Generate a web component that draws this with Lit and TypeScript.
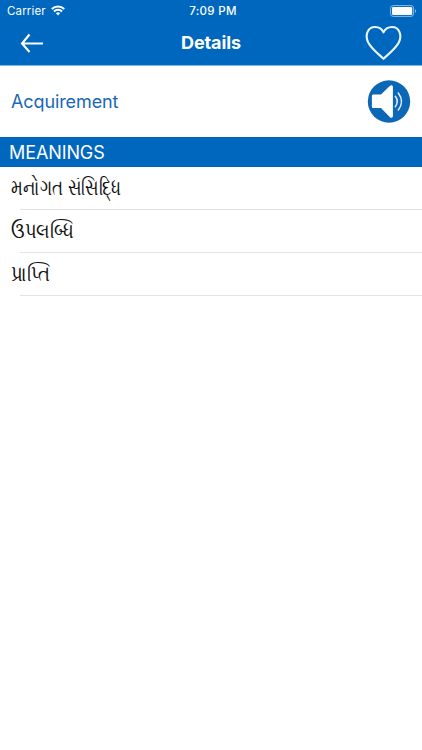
import { LitElement, html, css } from "lit";
import { styleMap } from "lit/directives/style-map.js";

interface Meaning {
  text: string;
  condense: number;
}

class AppRoot extends LitElement {
  static styles = css`
    :host {
      display: block;
      width: 100%;
      height: 750px;
      background: #fff;
      overflow: hidden;
      font-family: "Inter", "Liberation Sans", sans-serif;
    }
    svg { display: block; flex: none; }
    header { background: #0067bf; color: #fff; height: 65px; border-bottom: 1px solid #80b8ee; }
    .status {
      height: 21px;
      display: grid;
      grid-template-columns: 1fr auto 1fr;
      align-items: center;
      padding: 0 5px 0 7px;
      font-size: 11.5px;
    }
    .carrier { display: flex; align-items: center; gap: 5px; letter-spacing: 0.15px; }
    .time { font-weight: 500; letter-spacing: 0.35px; padding-left: 2px; }
    .battery { justify-self: end; }
    .nav {
      height: 43px;
      display: grid;
      grid-template-columns: 1fr auto 1fr;
      align-items: center;
      padding: 0 20px 0 20px;
    }
    .title { font-size: 18px; font-weight: 700; line-height: 24px; letter-spacing: -0.1px; }
    .heart { justify-self: end; }
    .word {
      height: 71px;
      display: flex;
      align-items: center;
      justify-content: space-between;
      padding: 0 11px;
      color: #1a68b3;
      font-size: 18px;
      letter-spacing: -0.1px;
    }
    .section {
      height: 30px;
      line-height: 31px;
      padding-left: 9px;
      background: #0067bf;
      color: #fff;
      font-size: 18px;
      letter-spacing: -0.1px;
    }
    .row {
      box-sizing: border-box;
      height: 43px;
      margin-left: 20px;
      border-bottom: 1px solid #e2e2e4;
      line-height: 39px;
    }
    .meaning {
      display: inline-block;
      margin-left: -9px;
      color: #111;
      font-family: "Noto Sans", sans-serif;
      font-size: 22px;
      white-space: nowrap;
      transform-origin: left center;
    }
  `;

  meanings: Meaning[] = [
    { text: "મનોગત સંસિદ્ધિ", condense: 0.757 },
    { text: "ઉપલબ્ધિ", condense: 0.815 },
    { text: "પ્રાપ્તિ", condense: 0.82 },
  ];

  render() {
    return html`
      <header>
        <div class="status">
          <div class="carrier">
            <span>Carrier</span>
            <svg width="14" height="11" viewBox="0 0 14 11" fill="none" stroke="#fff" stroke-width="2">
              <path d="M.8 4A8.700 8.700 0 0 1 13.200 4M3 6.500a5.600 5.600 0 0 1 8 0" />
              <path d="M7 10.400 4.900 8.300a3 3 0 0 1 4.200 0Z" fill="#fff" stroke="none" />
            </svg>
          </div>
          <div class="time">7:09 PM</div>
          <svg class="battery" width="27" height="12" viewBox="0 0 27 12">
            <rect x=".6" y=".6" width="23" height="10.8" rx="2.6" fill="none" stroke="#8abbe6" />
            <rect x="2" y="2" width="20.2" height="8" rx="1.2" fill="#fff" />
            <path d="M25 4.200c1.500.5 1.500 3.100 0 3.600Z" fill="#8abbe6" />
          </svg>
        </div>
        <div class="nav">
          <svg width="24" height="20" viewBox="0 0 24 20" fill="none" stroke="#fff" stroke-width="2.1">
            <path d="M23 10.500H2M9.500 1.500 2 10.500l7.500 8.500" />
          </svg>
          <div class="title">Details</div>
          <svg class="heart" width="37" height="36" viewBox="0 0 37 36" fill="none" stroke="#e9f6ff" stroke-width="2.100" stroke-linejoin="round">
            <path d="M18.500 33.800C13 28.500 6.500 23.800 3.200 17.500C-.3 10.500 2.500 2 10 2C14 2 17 3.800 18.500 7.400C20 3.800 23 2 27 2C34.500 2 37.300 10.500 33.800 17.500C30.500 23.800 24 28.500 18.500 33.800Z" />
          </svg>
        </div>
      </header>
      <div class="word">
        <span>Acquirement</span>
        <svg width="44" height="44" viewBox="0 0 44 44">
          <circle cx="22" cy="21.500" r="21.200" fill="#0c67b7" />
          <path d="M6.500 14.500h7.500L23 5.800c1.200-1.100 2.900-.6 2.900 1.200v29c0 1.700-1.700 2.200-2.900 1.200L14 28H6.500c-1.100 0-1.600-.6-1.600-1.600V16.100c0-1 .5-1.600 1.600-1.600Z" fill="#fff" />
          <path d="M28.300 16.300q4 5.200 0 10.400M31.300 13q6.400 8.500 0 17" fill="none" stroke="#e2f2ff" stroke-width="1.500" stroke-linecap="round" />
        </svg>
      </div>
      <div class="section">MEANINGS</div>
      ${this.meanings.map(
        (m) => html`<div class="row">
          <span class="meaning" style=${styleMap({ transform: `scaleX(${m.condense})` })}>${m.text}</span>
        </div>`
      )}
    `;
  }
}
customElements.define("app-root", AppRoot);
